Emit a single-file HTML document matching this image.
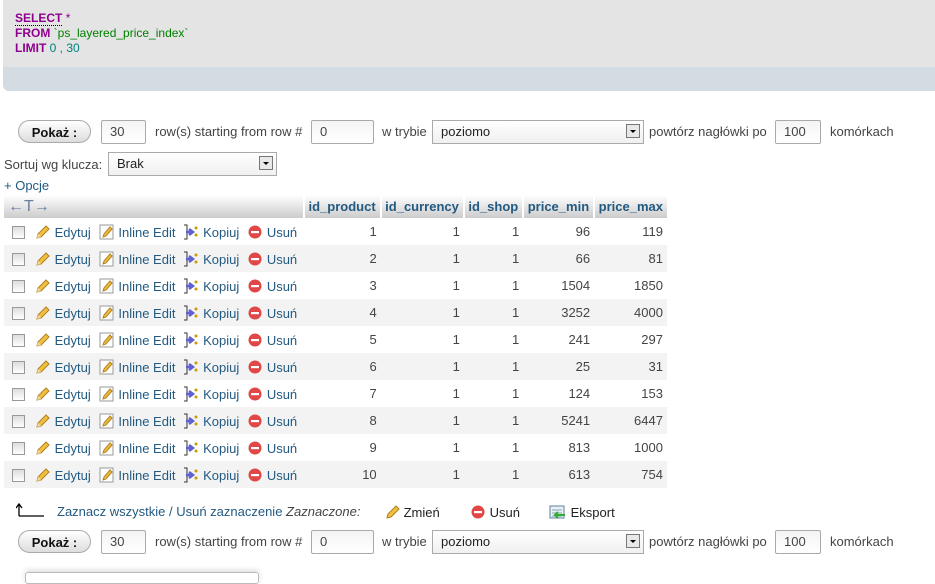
<!DOCTYPE html>
<html><head><meta charset="utf-8"><style>
body{margin:0;width:935px;height:576px;overflow:hidden;background:#fff;font-family:"Liberation Sans",Arial,sans-serif;font-size:13px;color:#444;position:relative}
.a{position:absolute;white-space:nowrap}
.sql{position:absolute;left:3px;top:0;width:940px;height:91px;background:#e4e4e4;border-radius:0 0 0 6px;overflow:hidden}
.sql .band{position:absolute;left:0;top:67px;width:100%;height:24px;background:#d3dce3}
.kw{color:#900090;font-weight:bold}
.btn{position:absolute;height:23px;border:1px solid #aaa;border-radius:12px;background:linear-gradient(#fff,#ddd);font-weight:bold;font-size:13px;color:#111;text-align:center;line-height:23px;box-sizing:border-box}
.inp{position:absolute;height:24px;border:1px solid #aaa;background:linear-gradient(#f4f4f4,#fff);box-sizing:border-box;font-size:13px;color:#444;padding-left:8px;line-height:22px;border-radius:2px}
.sel{position:absolute;height:24px;border:1px solid #aaa;background:linear-gradient(#fff,#f0f0f0);box-sizing:border-box;font-size:13px;color:#222;padding-left:8px;line-height:22px}
.sel i{position:absolute;right:3px;top:3px;width:14px;height:14px;border:1px solid #777;background:#e8e8e8;box-sizing:border-box}
.sel i:after{content:"";position:absolute;left:3px;top:5px;border-left:3px solid transparent;border-right:3px solid transparent;border-top:3px solid #000}
table{position:absolute;left:4px;top:195px;border-collapse:collapse;font-size:13px}
th{height:23px;padding:0 4px 0 3.5px;background:linear-gradient(#fff,#ccc);color:#235a81;font-weight:bold;font-size:13px;border-right:2px solid #fff;text-align:left}
td{height:27px;padding:0 4px;text-align:right;color:#444}
tr.e td{background:#f3f3f3}
td.act{text-align:left;padding:0 0 0 4px;color:#235a81}
.cb{display:inline-block;width:11px;height:11px;border:1px solid #999;background:linear-gradient(#ddd,#fff);vertical-align:-2px;margin:0 10px 0 4px}
svg{vertical-align:-3px}
.sp{display:inline-block;width:8px}
</style></head><body>
<div class="sql"><div class="band"></div>
<div class="a" style="left:12px;top:11px;line-height:15px;font-size:12px">
<span class="kw" style="border-bottom:1px dotted #000">SELECT</span> <span style="color:#900090">*</span><br>
<span class="kw">FROM</span> <span style="color:#008000">`ps_layered_price_index`</span><br>
<span class="kw">LIMIT</span> <span style="color:#008080">0 , 30</span></div></div>

<div class="btn" style="left:18px;top:120px;width:73px">Pokaż :</div>
<div class="inp" style="left:101px;top:120px;width:45px">30</div>
<div class="a" style="left:155px;top:124px">row(s) starting from row #</div>
<div class="inp" style="left:311px;top:120px;width:63px">0</div>
<div class="a" style="left:382px;top:124px">w trybie</div>
<div class="sel" style="left:432px;top:120px;width:212px">poziomo<i></i></div>
<div class="a" style="left:649px;top:124px">powtórz nagłówki po</div>
<div class="inp" style="left:775px;top:120px;width:46px">100</div>
<div class="a" style="left:830px;top:124px">komórkach</div>

<div class="a" style="left:4px;top:157px">Sortuj wg klucza:</div>
<div class="sel" style="left:108px;top:152px;width:169px">Brak<i></i></div>
<div class="a" style="left:4px;top:178px;color:#235a81">+ Opcje</div>

<table>
<tr><th style="width:291px;padding:0 4px"><span style="color:#6b7fa0;font-size:16px;font-weight:normal">←T→</span></th><th>id_product</th><th>id_currency</th><th>id_shop</th><th>price_min</th><th style="border-right:0">price_max</th></tr>
</table>

<div class="a" style="left:16px;top:502px;width:28px;height:14px;">
<svg width="30" height="16"><path d="M3 14V3M0 6l3-4 3 4M3 14H28" stroke="#000" stroke-width="1.3" fill="none"/></svg></div>
<div class="a" style="left:57px;top:504px;color:#235a81">Zaznacz wszystkie / Usuń zaznaczenie <i style="color:#444">Zaznaczone:</i></div>
<div class="a" style="left:384px;top:504px;font-size:13px;color:#222"><svg width="16" height="16"><path d="M3 14l1-4 8-8 3 3-8 8z" fill="#f0c040" stroke="#b08020"/></svg> Zmień</div>
<div class="a" style="left:470px;top:504px;font-size:13px;color:#222"><svg width="16" height="16"><circle cx="8" cy="8" r="6.5" fill="#e04848"/><rect x="4" y="7" width="8" height="2.2" fill="#fff"/></svg> Usuń</div>
<div class="a" style="left:549px;top:504px;font-size:13px;color:#222"><svg width="18" height="16"><rect x="1" y="2" width="14" height="12" fill="#e8f0f8" stroke="#6080a0"/><path d="M3 6h10M3 9h10M3 12h10" stroke="#8aa"/><path d="M6 11h10M9 8l-3 3 3 3" stroke="#3a3" stroke-width="2" fill="none"/></svg> Eksport</div>

<div class="btn" style="left:18px;top:530px;width:73px">Pokaż :</div>
<div class="inp" style="left:101px;top:530px;width:45px">30</div>
<div class="a" style="left:155px;top:534px">row(s) starting from row #</div>
<div class="inp" style="left:311px;top:530px;width:63px">0</div>
<div class="a" style="left:382px;top:534px">w trybie</div>
<div class="sel" style="left:432px;top:530px;width:212px">poziomo<i></i></div>
<div class="a" style="left:649px;top:534px">powtórz nagłówki po</div>
<div class="inp" style="left:775px;top:530px;width:46px">100</div>
<div class="a" style="left:830px;top:534px">komórkach</div>
<div class="a" style="left:25px;top:572px;width:232px;height:10px;border:1px solid #bbb;border-radius:3px;box-shadow:0 -2px 6px #ddd"></div>

<script>
var d=[[1,96,119],[2,66,81],[3,1504,1850],[4,3252,4000],[5,241,297],[6,25,31],[7,124,153],[8,5241,6447],[9,813,1000],[10,613,754]];
var pen='<svg width="16" height="16"><path d="M2 14l1-4 8-8 3 3-8 8z" fill="#f0c040" stroke="#b08020"/><path d="M2 14l1-4 3 3z" fill="#f5d9a0"/></svg>';
var ie='<svg width="16" height="16"><rect x="1" y="1" width="13" height="14" fill="#fff" stroke="#999"/><path d="M4 13l1-3 6-7 2 2-6 7z" fill="#f0c040" stroke="#b08020"/></svg>';
var kp='<svg width="16" height="16"><path d="M1 1h3v14H1" fill="none" stroke="#333"/><path d="M3 8h7M6 5l4 3-4 3" stroke="#6060d0" stroke-width="2.5" fill="none"/><circle cx="13" cy="4" r="1.5" fill="#c90"/><circle cx="13" cy="11" r="1.5" fill="#c90"/></svg>';
var dl='<svg width="16" height="16"><circle cx="8" cy="8" r="6.5" fill="#e04848"/><rect x="4" y="7" width="8" height="2.2" fill="#fff"/></svg>';
var h='';
d.forEach(function(r,i){h+='<tr'+(i%2?' class="e"':'')+'><td class="act"><span class="cb"></span>'+pen+' Edytuj<span class="sp"></span>'+ie+' Inline Edit<span class="sp"></span>'+kp+' Kopiuj<span class="sp"></span>'+dl+' Usuń</td><td>'+r[0]+'</td><td>1</td><td>1</td><td>'+r[1]+'</td><td>'+r[2]+'</td></tr>';});
document.querySelector('table').insertAdjacentHTML('beforeend',h);
</script>
</body></html>
